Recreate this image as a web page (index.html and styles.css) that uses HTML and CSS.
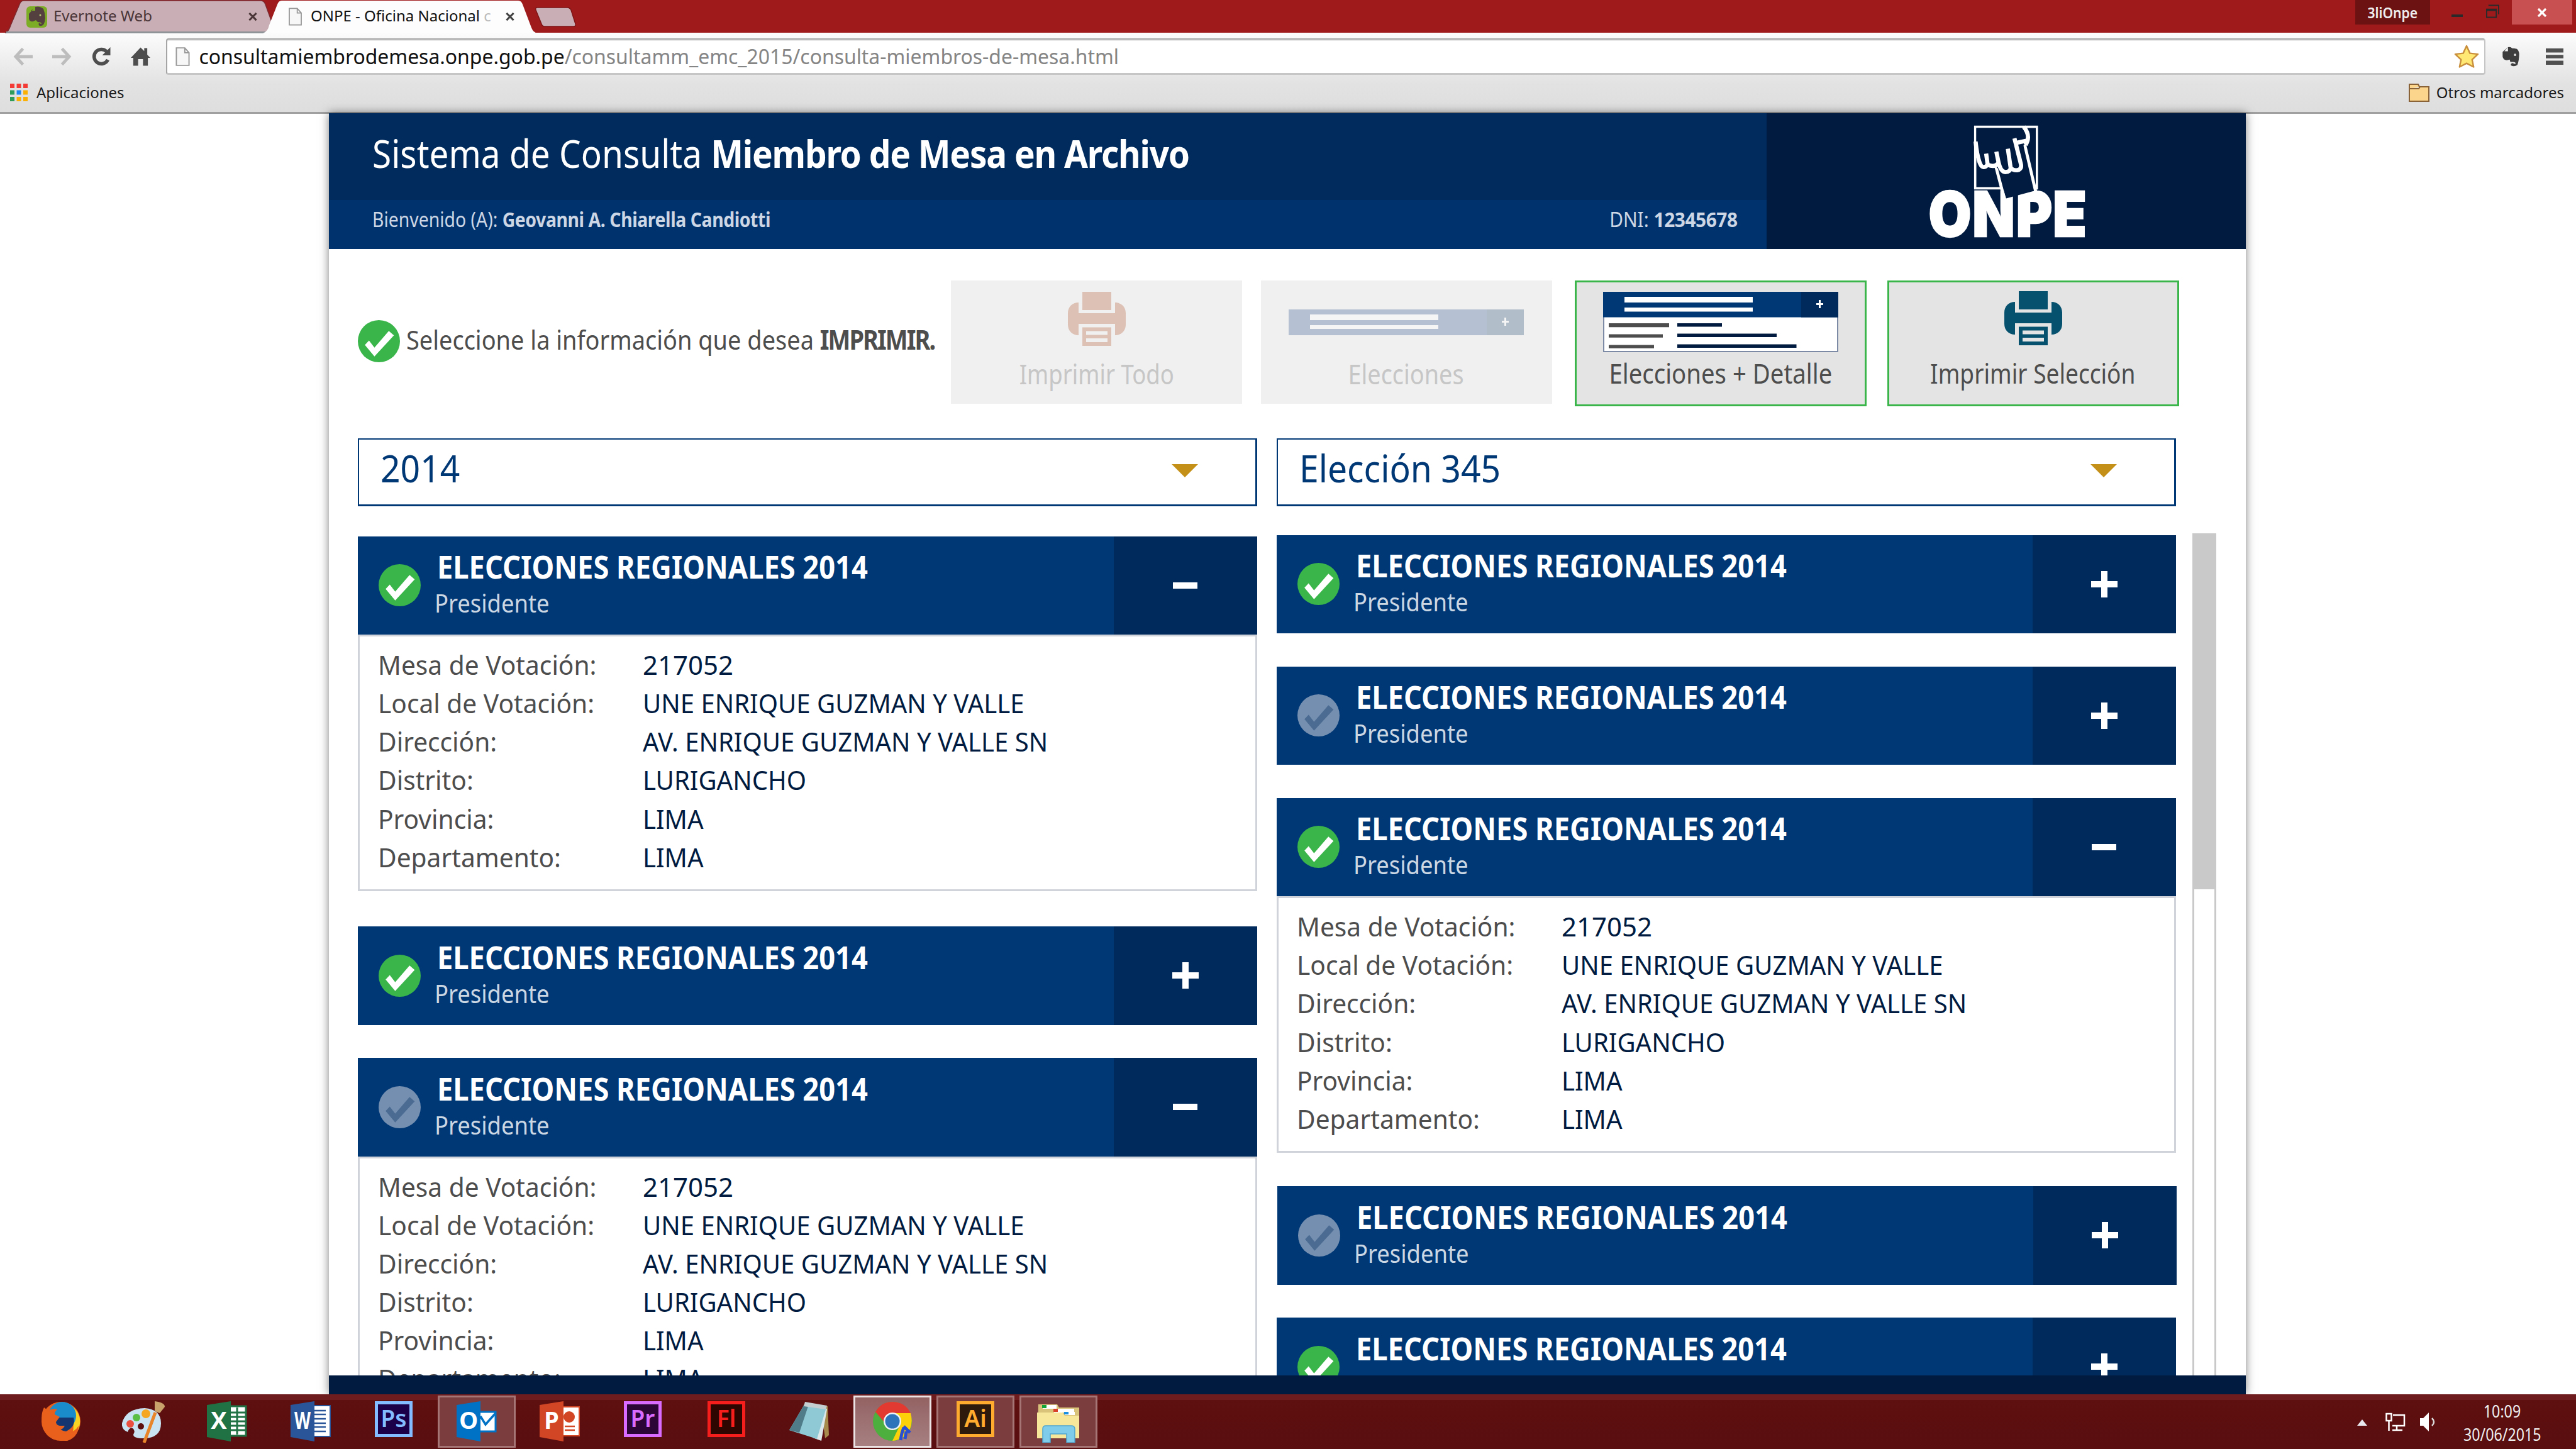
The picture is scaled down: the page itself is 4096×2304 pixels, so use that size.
FILE: index.html
```html
<!DOCTYPE html>
<html lang="es">
<head>
<meta charset="utf-8">
<title>ONPE - Oficina Nacional de Procesos Electorales</title>
<link rel="stylesheet" href="styles.css">
</head>
<body>
<svg class="defs" aria-hidden="true">
  <symbol id="check" viewBox="0 0 66 66"><circle cx="33" cy="33" r="33" fill="currentColor"/><path class="tick" d="M11 39 17.5 32 26 43 48.5 17 56.5 24 26 57z"/></symbol>
  <symbol id="plus" viewBox="0 0 42 42"><path fill="#fff" d="M16 0h10v16h16v10H26v16H16V26H0V16h16z"/></symbol>
  <symbol id="minus" viewBox="0 0 42 42"><path fill="#fff" d="M1 16h39v10H1z"/></symbol>
  <symbol id="printer" viewBox="0 0 92 86"><path fill="currentColor" fill-rule="evenodd" d="M23 0h46v29H23zM17 17v17h58V17c10 0 17 7 17 17v18c0 10-7 17-17 17V51H17v18C7 69 0 62 0 52V34C0 24 7 17 17 17zM23 56.500h46V86H23zM29 62.500v6h34v-6zM29 74v6h34v-6z"/></symbol>
  <symbol id="doc" viewBox="0 0 24 32"><path fill="#f7f7f7" stroke="#999" stroke-width="2" d="M1.500 1.500h14l7 8v21h-21zM15.500 1.500v8h7"/></symbol>
  <symbol id="cross" viewBox="0 0 16 16"><path fill="none" stroke="currentColor" stroke-width="3.200" d="M2 2l12 12M14 2 2 14"/></symbol>
</svg>

<header class="titlebar">
  <svg class="tabshapes" viewBox="0 0 930 54">
    <path fill="#c9afb5" stroke="#7b2a30" stroke-width="1.500" d="M8 52Q14 50 17 40L31 7Q33 1 38 1H414Q420 1 422 7L434 40Q436 50 442 52z"/>
    <path fill="#8f9498" d="M10 50h420v3H10z"/>
    <path fill="#fdfdfd" d="M418 53Q426 50 428 40L441 7Q443 1 448 1H824Q829 1 831 7L845 44Q848 52 855 53z"/>
    <path fill="#c9afb5" stroke="#7d1517" stroke-width="1.500" d="M854 12h48q4 0 6 4l7 22q1 4-3 4h-46q-4 0-5-4l-9-22q-1-4 2-4z"/>
  </svg>
  <div class="tab tab-one">
    <svg class="fav" viewBox="0 0 33 34"><rect width="33" height="34" rx="6" fill="#7dad25"/><path fill="#54413f" d="M11 4l-7 8v8q1 5 7 4l4-2 3 3q6 0 6 3-3 0-4-2-2 6 4 5 5-1 6-12 0-8-3-15-6-5-13-3v6H7z"/><circle cx="22" cy="14" r="1.500" fill="#b5cc75"/></svg>
    <span class="tabname">Evernote Web</span>
    <svg class="x"><use href="#cross"/></svg>
  </div>
  <div class="tab tab-two">
    <svg class="docicon"><use href="#doc"/></svg>
    <span class="tabname">ONPE - Oficina Nacional <i>c</i></span>
    <svg class="x"><use href="#cross"/></svg>
  </div>
  <div class="winctl">
    <span class="user"><b>3liOnpe</b></span>
    <svg class="mini" viewBox="0 0 18 4"><path fill="#2a2a2a" d="M0 0h18v4H0z"/></svg>
    <svg class="restore" viewBox="0 0 22 22"><path fill="none" stroke="#2a2a2a" stroke-width="2" d="M1 7.500h16V21H1zM1 9.500h16M4 1h17v15"/></svg>
    <span class="close"><svg class="x"><use href="#cross"/></svg></span>
  </div>
</header>

<div class="chrome">
  <div class="navrow">
    <svg class="nav" viewBox="0 0 32 32"><path fill="none" stroke="#bdbdbd" stroke-width="5" d="M16 3 4 16l12 13M4 16h28"/></svg>
    <svg class="nav" viewBox="0 0 32 32"><path fill="none" stroke="#bdbdbd" stroke-width="5" d="M16 3l12 13-12 13M28 16H0"/></svg>
    <svg class="nav" viewBox="0 0 32 32"><path fill="none" stroke="#4e4e4e" stroke-width="5.500" d="M27 21a11.500 11.500 0 1 1-2-13"/><path fill="#4e4e4e" d="M31 1v13H18z"/></svg>
    <svg class="nav" viewBox="0 0 32 32"><path fill="#4e4e4e" d="M16 1 0 18h4v13h8V20h8v11h8V18h4l-5-5V2h-5v5z"/></svg>
    <div class="url">
      <svg class="docicon"><use href="#doc"/></svg>
      <span>consultamiembrodemesa.onpe.gob.pe<em>/consultamm_emc_2015/consulta-miembros-de-mesa.html</em></span>
      <svg class="star" viewBox="0 0 40 38"><path fill="#ffe873" stroke="#c98f3c" stroke-width="2.500" stroke-linejoin="round" d="M20 2l5.500 12 13 1.500-9.500 9 2.500 12L20 30.500 8.500 36.500l2.500-12-9.500-9 13-1.500z"/></svg>
    </div>
    <svg class="elephant" viewBox="0 0 30 34"><path fill="#3d3d3d" d="M10 1 1 9v8q1 6 7 6l5-1 1 4h5q4 0 4 3-4 1-4-1-5 0-4 4 6 3 11-1 3-8 3-19-1-6-4-8-4-1-8-1-2-3-7-2v7H4z"/><circle cx="22" cy="14" r="2" fill="#ddd"/></svg>
    <svg class="menu" viewBox="0 0 30 28"><path fill="#505050" d="M0 0h30v7H0zM0 11h30v6H0zM0 21h30v7H0z"/></svg>
  </div>
  <div class="bookrow">
    <svg class="apps" viewBox="0 0 28 28"><path fill="#f33a34" d="M0 0h7v7H0zM10.500 0h7v7h-7zM21 0h7v7h-7z"/><path fill="#2f9c5a" d="M0 10.500h7v7H0zM0 21h7v7H0z"/><path fill="#1e88f2" d="M10.500 10.500h7v7h-7z"/><path fill="#fab005" d="M21 10.500h7v7h-7zM10.500 21h7v7h-7zM21 21h7v7h-7z"/></svg>
    <span>Aplicaciones</span>
    <svg class="folder" viewBox="0 0 33 29"><path fill="#fcd58d" stroke="#8a6238" stroke-width="2" d="M1 5V1h14l2 4h15v23H1zM1 8h15l2-3"/></svg>
    <span>Otros marcadores</span>
  </div>
</div>

<main class="page">
  <header class="head">
    <div class="headleft">
      <h1 class="apptitle"><span class="fit">Sistema de Consulta <b>Miembro de Mesa en Archivo</b></span></h1>
      <div class="who"><span class="fit">Bienvenido (A): <b>Geovanni A. Chiarella Candiotti</b></span><span class="fit dni">DNI: <b>12345678</b></span></div>
    </div>
    <div class="logo">
      <svg viewBox="0 0 990 720">
        <path fill="none" stroke="#fff" stroke-width="12" d="M339 72h327v326H339z"/>
        <text class="onpe" transform="scale(.88 1)" x="104 368 632 852" y="653">ONPE</text>
        <path fill="#001b3f" d="M452 285 503 452 652 412 603 165 540 150z"/>
        <path fill="none" stroke="#fff" stroke-width="16" d="M448 280 494 456M601 165 659 412"/>
        <path fill="#001b3f" d="M345 78H590L622 120 595 170 585 300 480 310 450 285 380 290 345 240z"/>
        <path fill="none" stroke="#fff" stroke-width="22" stroke-linejoin="round" d="M341 150Q350 235 366 270 380 300 405 273L397 214M405 273Q445 290 463 262L451 204M463 262Q475 312 498 312 525 312 527 290L512 188M527 290Q545 308 570 300 588 290 580 265L547 133M552 158L610 146M596 72Q636 120 606 168"/>
      </svg>
    </div>
  </header>

  <section class="tools">
    <svg class="check on"><use href="#check"/></svg>
    <p class="hint"><span class="fit">Seleccione la información que desea <b>IMPRIMIR.</b></span></p>
    <div class="btn off"><svg class="printer"><use href="#printer"/></svg><span class="lab l1">Imprimir Todo</span></div>
    <div class="btn off">
      <svg class="mini-card" viewBox="0 0 374 96"><path fill="#b5c1d3" d="M0 27h374v41H0z"/><path fill="#b2bdca" d="M315 27h59v41h-59z"/><path fill="#f5f5f5" d="M34 35h204v9H34zM34 52h204v6H34zM339 45h4v-5h3v5h4v3h-4v5h-3v-5h-4z"/></svg>
      <span class="lab l2">Elecciones</span></div>
    <div class="btn live">
      <svg class="mini-card" viewBox="0 0 374 96"><path fill="#fff" stroke="#7d8aa5" stroke-width="2" d="M1 1h372v94H1z"/><path fill="#003876" d="M0 0h374v40.500H0z"/><path fill="#002a5b" d="M315 0h59v40.500h-59z"/><path fill="#fff" d="M34 8h204v9H34zM34 25h204v6.500H34zM339 18h4v-5h3v5h4v3h-4v5h-3v-5h-4z"/><path fill="#4d4d4d" d="M9 50h96v6.200H9zM9 67.500h86v5.200H9zM9 84.500h72v5.300H9z"/><path fill="#001b3f" d="M118 50h71v5.500h-71zM118 66.500h158V72H118zM118 83.500h189.500V89H118z"/></svg>
      <span class="lab l3">Elecciones + Detalle</span></div>
    <div class="btn live"><svg class="printer"><use href="#printer"/></svg><span class="lab l4">Imprimir Selección</span></div>
  </section>

  <section class="selects">
    <div class="select"><span class="fit">2014</span><i class="caret"></i></div>
    <div class="select"><span class="fit">Elección 345</span><i class="caret"></i></div>
  </section>

  <section class="lists">
    <div class="col left">
      <article class="card">
        <div class="bar"><svg class="check on"><use href="#check"/></svg><div class="names"><h2>ELECCIONES REGIONALES 2014</h2><p>Presidente</p></div><div class="toggle"><svg><use href="#minus"/></svg></div></div>
        <dl><dt>Mesa de Votación:</dt><dd class="num">217052</dd><dt>Local de Votación:</dt><dd>UNE ENRIQUE GUZMAN Y VALLE</dd><dt>Dirección:</dt><dd>AV. ENRIQUE GUZMAN Y VALLE SN</dd><dt>Distrito:</dt><dd>LURIGANCHO</dd><dt>Provincia:</dt><dd>LIMA</dd><dt>Departamento:</dt><dd>LIMA</dd></dl>
      </article>
      <article class="card">
        <div class="bar"><svg class="check on"><use href="#check"/></svg><div class="names"><h2>ELECCIONES REGIONALES 2014</h2><p>Presidente</p></div><div class="toggle"><svg><use href="#plus"/></svg></div></div>
      </article>
      <article class="card">
        <div class="bar"><svg class="check dim"><use href="#check"/></svg><div class="names"><h2>ELECCIONES REGIONALES 2014</h2><p>Presidente</p></div><div class="toggle"><svg><use href="#minus"/></svg></div></div>
        <dl><dt>Mesa de Votación:</dt><dd class="num">217052</dd><dt>Local de Votación:</dt><dd>UNE ENRIQUE GUZMAN Y VALLE</dd><dt>Dirección:</dt><dd>AV. ENRIQUE GUZMAN Y VALLE SN</dd><dt>Distrito:</dt><dd>LURIGANCHO</dd><dt>Provincia:</dt><dd>LIMA</dd><dt>Departamento:</dt><dd>LIMA</dd></dl>
      </article>
    </div>
    <div class="col right">
      <article class="card">
        <div class="bar"><svg class="check on"><use href="#check"/></svg><div class="names"><h2>ELECCIONES REGIONALES 2014</h2><p>Presidente</p></div><div class="toggle"><svg><use href="#plus"/></svg></div></div>
      </article>
      <article class="card">
        <div class="bar"><svg class="check dim"><use href="#check"/></svg><div class="names"><h2>ELECCIONES REGIONALES 2014</h2><p>Presidente</p></div><div class="toggle"><svg><use href="#plus"/></svg></div></div>
      </article>
      <article class="card">
        <div class="bar"><svg class="check on"><use href="#check"/></svg><div class="names"><h2>ELECCIONES REGIONALES 2014</h2><p>Presidente</p></div><div class="toggle"><svg><use href="#minus"/></svg></div></div>
        <dl><dt>Mesa de Votación:</dt><dd class="num">217052</dd><dt>Local de Votación:</dt><dd>UNE ENRIQUE GUZMAN Y VALLE</dd><dt>Dirección:</dt><dd>AV. ENRIQUE GUZMAN Y VALLE SN</dd><dt>Distrito:</dt><dd>LURIGANCHO</dd><dt>Provincia:</dt><dd>LIMA</dd><dt>Departamento:</dt><dd>LIMA</dd></dl>
      </article>
      <article class="card shifted">
        <div class="bar"><svg class="check dim"><use href="#check"/></svg><div class="names"><h2>ELECCIONES REGIONALES 2014</h2><p>Presidente</p></div><div class="toggle"><svg><use href="#plus"/></svg></div></div>
      </article>
      <article class="card">
        <div class="bar"><svg class="check on"><use href="#check"/></svg><div class="names"><h2>ELECCIONES REGIONALES 2014</h2><p>Presidente</p></div><div class="toggle"><svg><use href="#plus"/></svg></div></div>
      </article>
    </div>
    <div class="scroll"><div class="thumb"></div></div>
  </section>
  <footer class="foot"></footer>
</main>

<nav class="taskbar">
  <div class="app"><svg viewBox="0 0 64 64"><circle cx="32" cy="32" r="31" fill="#e8601c"/><path fill="#f9d423" d="M50 8q14 12 12 28-2 14-12 20 4-20 0-48z"/><circle cx="34" cy="23" r="22" fill="#1a8ccc"/><path fill="#14356f" d="M22 26h30q4 14-12 22-16-2-18-22z"/><path fill="#e8601c" d="M5 10l7 5q6-4 14-2-5 5-4 8l8 4-6 8q0 5 6 6l8 0q-4 8-12 6 4 8 16 6 12-2 18-12 0 18-18 24Q12 64 4 42-2 24 5 10z"/></svg></div>
  <div class="app"><svg viewBox="0 0 70 66"><path fill="#c9e3f3" d="M36 11q26 2 26 24 0 24-28 24-16 0-16-6 4-6-1-10-5-2-8 6-10-4-9-14Q6 12 36 11z"/><circle cx="38" cy="20" r="7" fill="#f5a623"/><circle cx="23" cy="26" r="6" fill="#5abf45"/><circle cx="13" cy="36" r="6" fill="#e9503f"/><circle cx="30" cy="40" r="5" fill="#5c0e0f"/><path stroke="#e8852a" stroke-width="5" d="M53 18 35 66"/><path fill="#c9a16b" d="M52 0q16 2 16 9l-8 10-8-3z"/></svg></div>
  <div class="app"><svg viewBox="0 0 64 64"><path fill="#fff" stroke="#207245" stroke-width="3" d="M36 8h26v47H36z"/><path stroke="#207245" stroke-width="3" d="M38 18h24M38 25h24M38 32h24M38 39h24M38 46h24M48 10v43"/><path fill="#207245" d="M0 6 38 0v64L0 57z"/><text class="office" x="19" y="44">X</text></svg></div>
  <div class="app"><svg viewBox="0 0 64 64"><path fill="#fff" stroke="#2a5699" stroke-width="2" d="M36 7h27v49H36z"/><path stroke="#2a5699" stroke-width="2.500" d="M38 15h18M38 21h18M38 28h18M38 35h18M38 41h18M38 48h18"/><path fill="#2a5699" d="M0 6 38 0v64L0 57z"/><text class="office" x="19" y="44" textLength="26" lengthAdjust="spacingAndGlyphs">W</text></svg></div>
  <div class="app"><svg viewBox="0 0 60 64"><path fill="#1b0049" stroke="#84bdff" stroke-width="5" d="M2.500 2.500h55v52h-55z"/><text class="adobe" x="30" y="41" fill="#84bdff">Ps</text></svg></div>
  <div class="app open"><svg viewBox="0 0 64 64"><path fill="#fff" stroke="#0072c6" stroke-width="3" d="M36 17h26v31H36z"/><path fill="none" stroke="#0072c6" stroke-width="3.500" d="M38 24l8 13 16-18"/><path fill="#0072c6" d="M0 6 38 0v64L0 57z"/><text class="office" x="19" y="44">O</text></svg></div>
  <div class="app"><svg viewBox="0 0 64 64"><path fill="#fff" stroke="#d24625" stroke-width="2" d="M36 9h27v46H36z"/><circle cx="47" cy="25" r="9" fill="#d24625"/><path stroke="#d24625" stroke-width="2.500" d="M40 40h16M40 46h16"/><path fill="#d24625" d="M0 6 38 0v64L0 57z"/><text class="office" x="19" y="44">P</text></svg></div>
  <div class="app"><svg viewBox="0 0 60 64"><path fill="#2b0636" stroke="#d96bff" stroke-width="5" d="M2.500 2.500h55v52h-55z"/><text class="adobe" x="30" y="41" fill="#d96bff">Pr</text></svg></div>
  <div class="app"><svg viewBox="0 0 60 64"><path fill="#2d0602" stroke="#f51e1c" stroke-width="5" d="M2.500 2.500h55v52h-55z"/><text class="adobe" x="30" y="41" fill="#f51e1c">Fl</text></svg></div>
  <div class="app"><svg viewBox="0 0 64 64"><path fill="#a58a4c" d="M50 8h11l2 46-6 5z"/><path fill="#dce8ea" d="M56 8l4 5-9 50-14-5z"/><path fill="#8fc9d6" d="M24 5l35 5-15 50L0 46z"/><path fill="#4f7c88" d="M24 5 0 46l16 4L30 8z"/><path fill="#c4cdd0" d="M25 1l35 6-2 6-35-5z"/></svg></div>
  <div class="app active"><svg viewBox="0 0 64 64"><circle cx="32" cy="32" r="31" fill="#4caf3e"/><path fill="#e23a31" d="M5 17Q14 1 32 1q20 0 29 18H32L18 32z"/><path fill="#fdd10a" d="M32 19h29q6 22-9 36-8 7-20 8l12-25z"/><circle cx="32" cy="32" r="14" fill="#eef2f6"/><circle cx="32" cy="32" r="11.500" fill="#2d74bb"/><path fill="none" stroke="#2a4fd0" stroke-width="5" d="M50 40l10 10M50 42q-4 10-5 20M54 48l-2 12"/></svg></div>
  <div class="app open"><svg viewBox="0 0 60 64"><path fill="#2e1a0c" stroke="#ffab2e" stroke-width="5" d="M2.500 2.500h55v52h-55z"/><text class="adobe" x="30" y="41" fill="#ffab2e">Ai</text></svg></div>
  <div class="app open"><svg viewBox="0 0 70 66"><path fill="#d9c27a" d="M3 5h30l3 5h32v48H2z"/><path fill="#fff" d="M10 6h22v6H10zM28 12h32v6H28z"/><path fill="#12a53a" d="M9 6h7v5H9z"/><path fill="#d8402a" d="M27 12h7v5h-7z"/><path fill="#f7e79a" d="M1 18h40l4 5h23v36H1z"/><path fill="#fff" d="M45 17h16v5H45z"/><path fill="#1b8fe0" d="M44 17h7v4h-7z"/><path fill="#7ecbea" stroke="#4fa5cf" stroke-width="1.500" d="M10 66V44q0-5 5-5h40q6 0 6 5v22H48V52H22v14z"/></svg></div>
  <div class="tray">
    <svg class="up" viewBox="0 0 16 10"><path fill="#e8e8ee" d="M0 10 8 0l8 10z"/></svg>
    <svg class="net" viewBox="0 0 34 32"><path fill="none" stroke="#fff" stroke-width="2.500" d="M13 5h18v17H12M2.500 3h8v11h-8zM6.500 14v16M12 29h16M19 23v5"/></svg>
    <svg class="vol" viewBox="0 0 28 32"><path fill="#fff" d="M1 10h5L15 1v30l-9-9H1z"/><path fill="none" stroke="#ddd" stroke-width="2.500" d="M20 10q6 6 0 12"/></svg>
    <div class="clock"><span>10:09</span><span>30/06/2015</span></div>
  </div>
</nav>
</body>
</html>
```
FILE: styles.css
```css
* { box-sizing: border-box; margin: 0; padding: 0; }
html, body { width: 4096px; height: 2304px; overflow: hidden; }
body { background: #fff; font-family: "Noto Sans", "Open Sans", sans-serif; display: flex; flex-direction: column; }
svg { display: block; flex: none; }
i, em { font-style: normal; }
.defs { display: none; }
.fit { display: inline-block; white-space: nowrap; transform-origin: 0 50%; }

/* browser frame */
.titlebar { position: relative; flex: none; height: 52px; background: #9f1a1a; display: flex; font-size: 24px; line-height: 34px; color: #111; }
.tabshapes { position: absolute; left: 0; top: 0; width: 930px; height: 54px; z-index: 1; }
.tab { position: relative; z-index: 2; display: flex; height: 52px; white-space: nowrap; }
.tab-one { width: 423px; padding-left: 42px; color: #4a3538; }
.tab-two { width: 430px; padding-left: 35px; }
.tabname { margin-top: 8px; width: 309px; }
.tabname i { color: #bbb; }
.tab .fav { width: 33px; height: 34px; margin: 10px 10px 0 0; }
.tab .docicon { width: 23px; height: 29px; margin: 12px 13px 0 0; }
.tab .x { width: 16px; height: 15px; margin-top: 19px; }
.tab-two .x { color: #444; }
.winctl { margin-left: auto; display: flex; height: 39px; padding-right: 6px; }
.user { width: 119px; background: #6d1213; color: #eee; text-align: center; line-height: 39px; display: flex; justify-content: center; }
.user b { transform: scaleX(.88); font-weight: 600; }
.mini { width: 18px; height: 4px; margin: 23px 0 0 34px; }
.restore { width: 21px; height: 22px; margin: 7px 0 0 37px; }
.close { width: 96px; margin-left: 20px; background: #c85050; color: #fff; display: flex; align-items: center; justify-content: center; }
.close .x { width: 18px; height: 16px; }
.chrome { flex: none; height: 129px; background: linear-gradient(#fcfcfc, #e2e2e2 65%, #dedede); border-bottom: 3px solid #a0a0a0; }
.navrow { display: flex; align-items: center; height: 77px; padding: 9px 20px 10px 21px; }
.nav { width: 31px; height: 32px; margin-right: 30.500px; margin-top: -1px; }
.nav + .nav + .nav { width: 33px; }
.nav + .nav + .nav + .nav { width: 31px; margin-right: 25px; }
.url { flex: 1; display: flex; align-items: center; height: 58px; background: #fff; border: 2px solid #a5a5a5; border-bottom: 3px solid #c6c6c6; border-right-color: #c6c6c6; border-radius: 4px; box-shadow: inset 0 2px #e8e8e8; padding: 0 8px 0 13px; font-size: 31.900px; line-height: 44px; color: #111; white-space: nowrap; }
.url em { color: #858585; }
.url .docicon { width: 23px; height: 32px; margin-right: 15px; }
.star { width: 40px; height: 37px; margin-left: auto; }
.elephant { width: 29px; height: 32px; margin-left: 26px; }
.menu { width: 28px; height: 28px; margin-left: 41px; }
.bookrow { display: flex; align-items: center; height: 42px; margin-top: -3px; padding: 0 19px 0 16px; font-size: 24px; line-height: 36px; color: #1b1b1b; }
.apps { width: 28px; height: 28px; margin-right: 14px; }
.folder { width: 33px; height: 29px; margin: 0 11px 0 auto; }

/* application page */
.page { position: relative; flex: none; display: flex; flex-direction: column; width: 3048px; height: 2037px; margin-left: 523px; margin-top: -1px; background: #fff; box-shadow: 0 0 14px rgba(0,0,0,.5); }
.head { flex: none; display: flex; height: 215.500px; color: #fff; }
.headleft { width: 2286px; background: #00336d; }
.apptitle { height: 138px; background: #002b5c; padding: 17px 0 0 69px; font-size: 61.800px; line-height: 92px; font-weight: 400; }
.apptitle .fit { transform: scaleX(.889); }
.apptitle b { letter-spacing: -1.400px; }
.who { display: flex; justify-content: space-between; height: 77px; padding: 6px 0 0 69px; font-size: 32.800px; line-height: 50px; color: #ccd6e4; }
.who .fit { transform: scaleX(.865); }
.who b { letter-spacing: -.470px; }
.who .dni { transform: scaleX(.91); transform-origin: 100% 50%; margin-right: 46px; }
.logo { width: 762px; background: #001b3f; padding-left: 230px; }
.logo svg { width: 297px; height: 216px; }
.onpe { font: 900 332px Inter, "Open Sans", sans-serif; fill: #fff; stroke: #fff; stroke-width: 8px; }

.tools { flex: none; display: flex; height: 200px; margin-top: 50.500px; padding-left: 46px; }
.check { width: 67px; height: 67px; }
.on { color: #39b54a; }
.on use { fill: #fff; }
.dim { color: #758fb0; }
.dim use { fill: #4b6b92; }
.tools .check { margin-top: 63px; }
.hint { flex: none; width: 868px; margin: 64px 0 0 8px; padding-left: 2px; font-size: 42.700px; line-height: 60px; color: #4d4d4d; }
.hint .fit { transform: scaleX(.889); }
.hint b { letter-spacing: -2.200px; }
.btn { flex: none; display: flex; flex-direction: column; align-items: center; width: 463px; height: 196px; background: #f0f0f0; color: #c6c6c6; padding-top: 18px; font-size: 43px; line-height: 60px; }
.btn + .btn { margin-left: 29.500px; }
.btn.live { width: 464px; height: 199.500px; background: #e4e4e4; border: 3.600px solid #39b54a; color: #4d4d4d; padding-top: 14.400px; }
.off + .btn.live { margin-left: 36.500px; }
.live + .btn.live { margin-left: 32.500px; }
.printer { width: 92px; height: 86px; color: #dcc1b4; margin-bottom: 15px; }
.live .printer { color: #06516d; }
.mini-card { width: 374px; height: 96px; margin: 1px 0 4px; }
.lab { white-space: nowrap; }
.l1 { transform: scaleX(.850); }
.l2 { transform: scaleX(.880); }
.l3 { transform: scaleX(.892); }
.l4 { transform: scaleX(.862); }

.selects { flex: none; display: flex; gap: 31px; margin-top: 51px; padding-left: 46px; }
.select { display: flex; align-items: center; justify-content: space-between; width: 1430px; height: 108px; border: solid #003876; border-width: 2px 3px 3px 2px; padding: 0 91px 0 34px; font-size: 59.400px; line-height: 90px; color: #003876; }
.select .fit { transform: scaleX(.930); margin-top: -13px; }
.caret { width: 42px; height: 21px; background: #c49017; clip-path: polygon(0 0, 100% 0, 50% 100%); margin-top: -4px; }

.lists { flex: 1; min-height: 0; display: flex; overflow: hidden; margin-top: 43px; padding-left: 46px; }
.col { width: 1430px; display: flex; flex-direction: column; flex: none; }
.left { margin-right: 31px; padding-top: 4.500px; gap: 52.500px; }
.right { padding-top: 2.700px; gap: 52.500px; }
.card { flex: none; }
.left .card:nth-child(2) { margin-top: 4px; }
.right .card:nth-child(4) { margin-top: 1px; }
.shifted { position: relative; left: 1px; }
.bar { display: flex; align-items: center; height: 156.500px; background: #003876; color: #fff; padding-left: 32.500px; }
.names { flex: 1; margin-left: 26px; padding-bottom: 4px; }
.names h2 { font-size: 50.400px; line-height: 60px; font-weight: 700; white-space: nowrap; transform: scaleX(.897); transform-origin: 0 50%; margin-top: -1px; }
.names p { font-size: 40.200px; line-height: 52px; color: #ccd7e4; transform: scaleX(.905); transform-origin: 0 50%; margin: 2px 0 0 -4px; }
.toggle { width: 228px; height: 100%; background: #002a5b; display: flex; align-items: center; justify-content: center; }
.toggle svg { width: 42px; height: 42px; }
dl { display: grid; grid-template-columns: 421px 1fr; grid-auto-rows: 61.150px; height: 407.500px; border: 3px solid #d0d3d9; padding: 14px 0 0 28.500px; font-size: 42.100px; line-height: 61.150px; white-space: nowrap; }
dt, dd { transform-origin: 0 50%; }
dt { color: #4d4d4d; transform: scaleX(.966); }
dd { color: #001b3f; transform: scaleX(.952); }
dd.num { transform: scaleX(.997); }
.scroll { width: 38px; margin-left: 25.500px; border: solid #c9c9c9; border-width: 0 3px; }
.thumb { height: 566px; background: #c9c9c9; margin: 0 -3px; }
.foot { flex: none; height: 30px; background: #001b3f; }

/* desktop taskbar */
.taskbar { position: relative; flex: 1; display: flex; gap: 8.200px; padding: 2px 0 0 35px; background: linear-gradient(#6f1c1f 9px, #5e0f10 9px, #5a0e0f); }
.app { width: 124px; height: 83px; display: flex; align-items: flex-start; justify-content: center; padding-top: 9px; }
.app svg { height: 64px; width: 64px; }
.app svg[viewBox="0 0 60 64"] { width: 60px; }
.app svg[viewBox="0 0 70 66"] { width: 70px; height: 66px; }
.open, .active { padding-top: 6px; border: 3px solid #a57475; background: #7b3d3e; }
.active { border-color: #ece4e4; background: linear-gradient(#936263, #a78081); }
.office { font: 700 38px "Open Sans", sans-serif; fill: #fff; text-anchor: middle; }
.adobe { font: 600 37px "Noto Sans", sans-serif; text-anchor: middle; }
.tray { margin-left: auto; display: flex; color: #eee; }
.up { width: 16px; height: 10px; margin-top: 38px; }
.net { width: 34px; height: 32px; margin: 26px 0 0 28px; }
.vol { width: 28px; height: 32px; margin: 26px 0 0 21px; }
.clock { width: 221px; display: flex; flex-direction: column; align-items: center; padding: 6px 14px 0 0; font-size: 27px; line-height: 37px; }
.clock span { transform: scaleX(.86); }
```
